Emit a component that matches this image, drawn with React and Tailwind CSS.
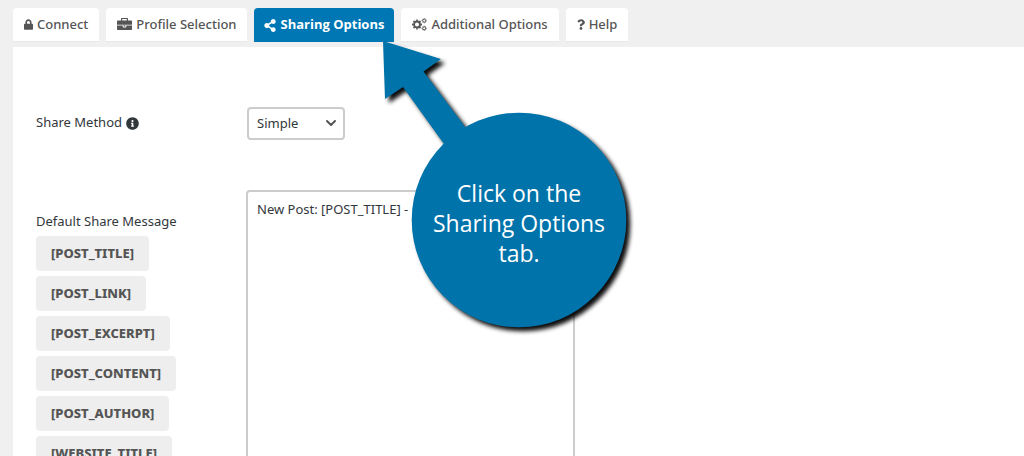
import React from "react";
import { FaLock, FaShareAlt, FaQuestion, FaInfoCircle } from "react-icons/fa";
import { ChevronDown } from "lucide-react";

function BriefcaseIcon({ className }) {
  return (
    <svg viewBox="0 0 15 13" className={className} fill="currentColor" aria-hidden="true">
      <path d="M4 2.600V1C4 .4 4.400 0 5 0h5c.6 0 1 .4 1 1v1.600h3c.6 0 1 .4 1 1v3.200H0V3.600c0-.6.4-1 1-1h3zm1.200 0h4.600V1.100H5.200v1.500z" fillRule="evenodd" />
      <path d="M0 7.600h5.700v1.100c0 .4.300.7.700.7h2.200c.4 0 .7-.3.7-.7V7.600H15V11c0 .6-.4 1-1 1H1c-.6 0-1-.4-1-1V7.600z" />
      <path d="M6.600 7.200h1.800v1.300H6.600z" />
    </svg>
  );
}

function GearsIcon({ className }) {
  return (
    <svg viewBox="0 0 15 13" className={className} fill="none" stroke="currentColor" aria-hidden="true">
      <circle cx="5" cy="6.500" r="3" strokeWidth="1.900" />
      <circle cx="5" cy="6.500" r="4.300" strokeWidth="1.400" pathLength="16" strokeDasharray="1 1" strokeDashoffset="0.500" />
      <circle cx="12.200" cy="2.700" r="1.500" strokeWidth="1" />
      <circle cx="12.200" cy="2.700" r="2.200" strokeWidth="0.900" pathLength="16" strokeDasharray="1 1" strokeDashoffset="0.500" />
      <circle cx="12.200" cy="10.300" r="1.500" strokeWidth="1" />
      <circle cx="12.200" cy="10.300" r="2.200" strokeWidth="0.900" pathLength="16" strokeDasharray="1 1" strokeDashoffset="0.500" />
    </svg>
  );
}

const tabs = [
  { label: "Connect", Icon: FaLock, size: "w-[9px]" },
  { label: "Profile Selection", Icon: BriefcaseIcon, size: "w-[15px]" },
  { label: "Sharing Options", Icon: FaShareAlt, size: "w-3", active: true },
  { label: "Additional Options", Icon: GearsIcon, size: "w-[15px]" },
  { label: "Help", Icon: FaQuestion, size: "w-2" },
];

const tags = [
  "[POST_TITLE]",
  "[POST_LINK]",
  "[POST_EXCERPT]",
  "[POST_CONTENT]",
  "[POST_AUTHOR]",
  "[WEBSITE_TITLE]",
];

function Tab({ label, Icon, size, active }) {
  return (
    <button
      type="button"
      role="tab"
      aria-selected={Boolean(active)}
      className={
        active
          ? "flex items-center gap-1 rounded-t bg-[#0077b5] px-2.5 font-['Open_Sans',sans-serif] font-bold text-white"
          : "flex items-center gap-1 rounded-t border-b border-[#e8e8e8] bg-white px-[11px] font-medium text-[#555]"
      }
    >
      <Icon className={`${size} h-[13px] shrink-0`} />
      <span className="whitespace-nowrap">{label}</span>
    </button>
  );
}

function Callout() {
  return (
    <div className="pointer-events-none absolute left-[378px] top-[36px] h-[304px] w-[264px]">
      <svg viewBox="378 36 264 304" className="h-full w-full drop-shadow-[4px_4px_2px_rgba(0,0,0,0.95)]" aria-hidden="true">
        <path d="M383 41L441 59L423.500 71.500L466 128L444 144L403 87L385 99Z" fill="#0073aa" />
        <circle cx="519" cy="220" r="107.300" fill="#0073aa" />
      </svg>
      <p className="absolute left-[34px] top-[142px] w-[214px] text-center font-['Open_Sans','Noto_Sans',sans-serif] text-[23px] leading-[30px] text-white">
        Click on the
        <br />
        Sharing Options
        <br />
        tab.
      </p>
    </div>
  );
}

export default function App() {
  return (
    <div className="relative flex h-screen flex-col overflow-hidden bg-[#f0f0f0] pl-[13px] pt-2 font-['Noto_Sans','Open_Sans',sans-serif] text-[13px] text-[#32373c]">
      <div role="tablist" className="flex h-[34px] shrink-0 gap-[7px]">
        {tabs.map((tab) => (
          <Tab key={tab.label} {...tab} />
        ))}
      </div>
      <main className="mt-[5px] flex grow flex-col gap-[50px] bg-white pl-[23px] pt-[60px]">
        <div className="flex">
          <div className="flex h-8 w-[211px] items-center gap-1">
            <label htmlFor="method">Share Method</label>
            <FaInfoCircle className="h-[13px] w-[13px] text-[#32373c]" />
          </div>
          <div className="relative">
            <select
              id="method"
              defaultValue="Simple"
              className="h-[33px] w-[98px] appearance-none rounded border-2 border-[#ccc] bg-white pl-2"
            >
              <option>Simple</option>
            </select>
            <ChevronDown className="pointer-events-none absolute right-1.5 top-2 h-4 w-4 stroke-3 text-[#555]" />
          </div>
        </div>
        <div className="flex items-start">
          <div className="flex w-[210px] flex-col items-start gap-[5px] pt-[21px]">
            <label htmlFor="message" className="leading-5">
              Default Share Message
            </label>
            {tags.map((tag) => (
              <button
                key={tag}
                type="button"
                className="h-[35px] rounded bg-[#eee] px-[15px] text-[13px] font-extrabold text-[#555]"
              >
                {tag}
              </button>
            ))}
          </div>
          <textarea
            id="message"
            defaultValue="New Post: [POST_TITLE] -"
            className="h-[330px] w-[329px] resize-none rounded border-2 border-[#ccc] px-[9px] py-[7px] leading-5"
          />
        </div>
      </main>
      <Callout />
    </div>
  );
}
